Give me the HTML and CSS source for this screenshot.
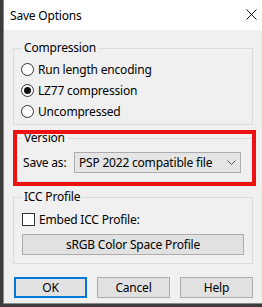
FILE: index.html
```html
<!DOCTYPE html>
<html lang="en">

<head>
    <meta charset="UTF-8">
    <title>Save Options</title>
    <link rel="stylesheet" href="styles.css">
</head>

<body>
    <div class="window">
        <!-- 标题栏 -->
        <div class="titlebar">
            <span class="title">Save Options</span>
            <svg class="close" width="11" height="11" viewBox="0 0 11 11">
                <path d="M0.5 0.5 L10.5 10.5 M10.5 0.5 L0.5 10.5" stroke="#111" stroke-width="1" fill="none" />
            </svg>
        </div>

        <div class="content">
            <fieldset class="group compression">
                <legend>Compression</legend>
                <div class="option"><span class="radio"></span>Run length encoding</div>
                <div class="option"><span class="radio checked"></span>LZ77 compression</div>
                <div class="option"><span class="radio"></span>Uncompressed</div>
            </fieldset>

            <fieldset class="group version">
                <legend>Version</legend>
                <div class="row">
                    <span class="label">Save as:</span>
                    <div class="select">
                        <span>PSP 2022 compatible file</span>
                        <svg width="9" height="5" viewBox="0 0 9 5">
                            <path d="M0.5 0.5 L4.5 4.5 L8.5 0.5" stroke="#555" stroke-width="1" fill="none" />
                        </svg>
                    </div>
                </div>
            </fieldset>

            <fieldset class="group icc">
                <legend>ICC Profile</legend>
                <div class="option"><span class="checkbox"></span>Embed ICC Profile:</div>
                <button class="button wide">sRGB Color Space Profile</button>
            </fieldset>

            <div class="actions">
                <button class="button default">OK</button>
                <button class="button">Cancel</button>
                <button class="button">Help</button>
            </div>
        </div>

        <!-- 红色标注框 -->
        <div class="highlight"></div>
    </div>
</body>

</html>
```

FILE: styles.css
```css
body {
    margin: 0;
    background-color: #3c3c3c;
    font-family: "Noto Sans", "Open Sans", sans-serif;
    font-size: 12px;
    color: #000;
}

.window {
    position: relative;
    margin-left: 3px;
    width: 259px;
    height: 304px;
    background-color: #f0f0f0;
    border-left: 1px solid #8a8a8a;
    border-bottom: 1px solid #8a8a8a;
    box-sizing: border-box;
}

/* 标题栏 */
.titlebar {
    height: 30px;
    background-color: #fff;
    display: flex;
    align-items: center;
    justify-content: space-between;
    padding: 0 5px 0 6px;
}

.title {
    font-size: 12px;
    letter-spacing: -0.2px;
}

.close {
    margin-top: -1px;
}

.content {
    padding: 10px 9px 0 9px;
}

.group {
    margin: 0 0 5px 0;
    padding: 0 7px;
    border: 1px solid #dcdcdc;
    width: 240px;
    box-sizing: border-box;
}

.group legend {
    padding: 0 2px;
    margin-left: 1px;
    line-height: 16px;
    letter-spacing: -0.2px;
}

.compression {
    padding-top: 3px;
    padding-bottom: 2px;
}

.version {
    padding-top: 6px;
    padding-bottom: 8px;
    margin-bottom: 7px;
}

.icc {
    padding-top: 4px;
    padding-bottom: 8px;
}

.option {
    display: flex;
    align-items: center;
    height: 21px;
    letter-spacing: -0.2px;
}

.radio {
    width: 13px;
    height: 13px;
    box-sizing: border-box;
    border: 1px solid #333;
    border-radius: 50%;
    background-color: #fff;
    margin-right: 4px;
    display: flex;
    align-items: center;
    justify-content: center;
}

.radio.checked::after {
    content: "";
    width: 7px;
    height: 7px;
    border-radius: 50%;
    background-color: #111;
}

.checkbox {
    width: 13px;
    height: 13px;
    box-sizing: border-box;
    border: 1px solid #333;
    background-color: #fff;
    margin-left: 1px;
    margin-right: 4px;
}

.row {
    display: flex;
    align-items: center;
}

.label {
    margin-left: 2px;
    width: 51px;
    letter-spacing: -0.2px;
}

.select {
    width: 167px;
    height: 21px;
    box-sizing: border-box;
    background-color: #e5e5e5;
    border: 1px solid #adadad;
    display: flex;
    align-items: center;
    justify-content: space-between;
    padding: 0 4px 0 4px;
    letter-spacing: -0.2px;
}

.button {
    font-family: inherit;
    font-size: 12px;
    color: #000;
    background-color: #e1e1e1;
    border: 1px solid #adadad;
    height: 21px;
    padding: 0;
    letter-spacing: -0.2px;
}

.button.wide {
    display: block;
    margin: 4px 0 0 1px;
    width: 222px;
}

.actions {
    display: flex;
    justify-content: space-between;
    margin-top: 13px;
    padding-left: 1px;
}

.actions .button {
    width: 73px;
}

.button.default {
    border: 2px solid #0078d7;
}

.highlight {
    position: absolute;
    left: 9px;
    top: 130px;
    width: 243px;
    height: 56px;
    box-sizing: border-box;
    border: 4px solid #ee1111;
}
```
